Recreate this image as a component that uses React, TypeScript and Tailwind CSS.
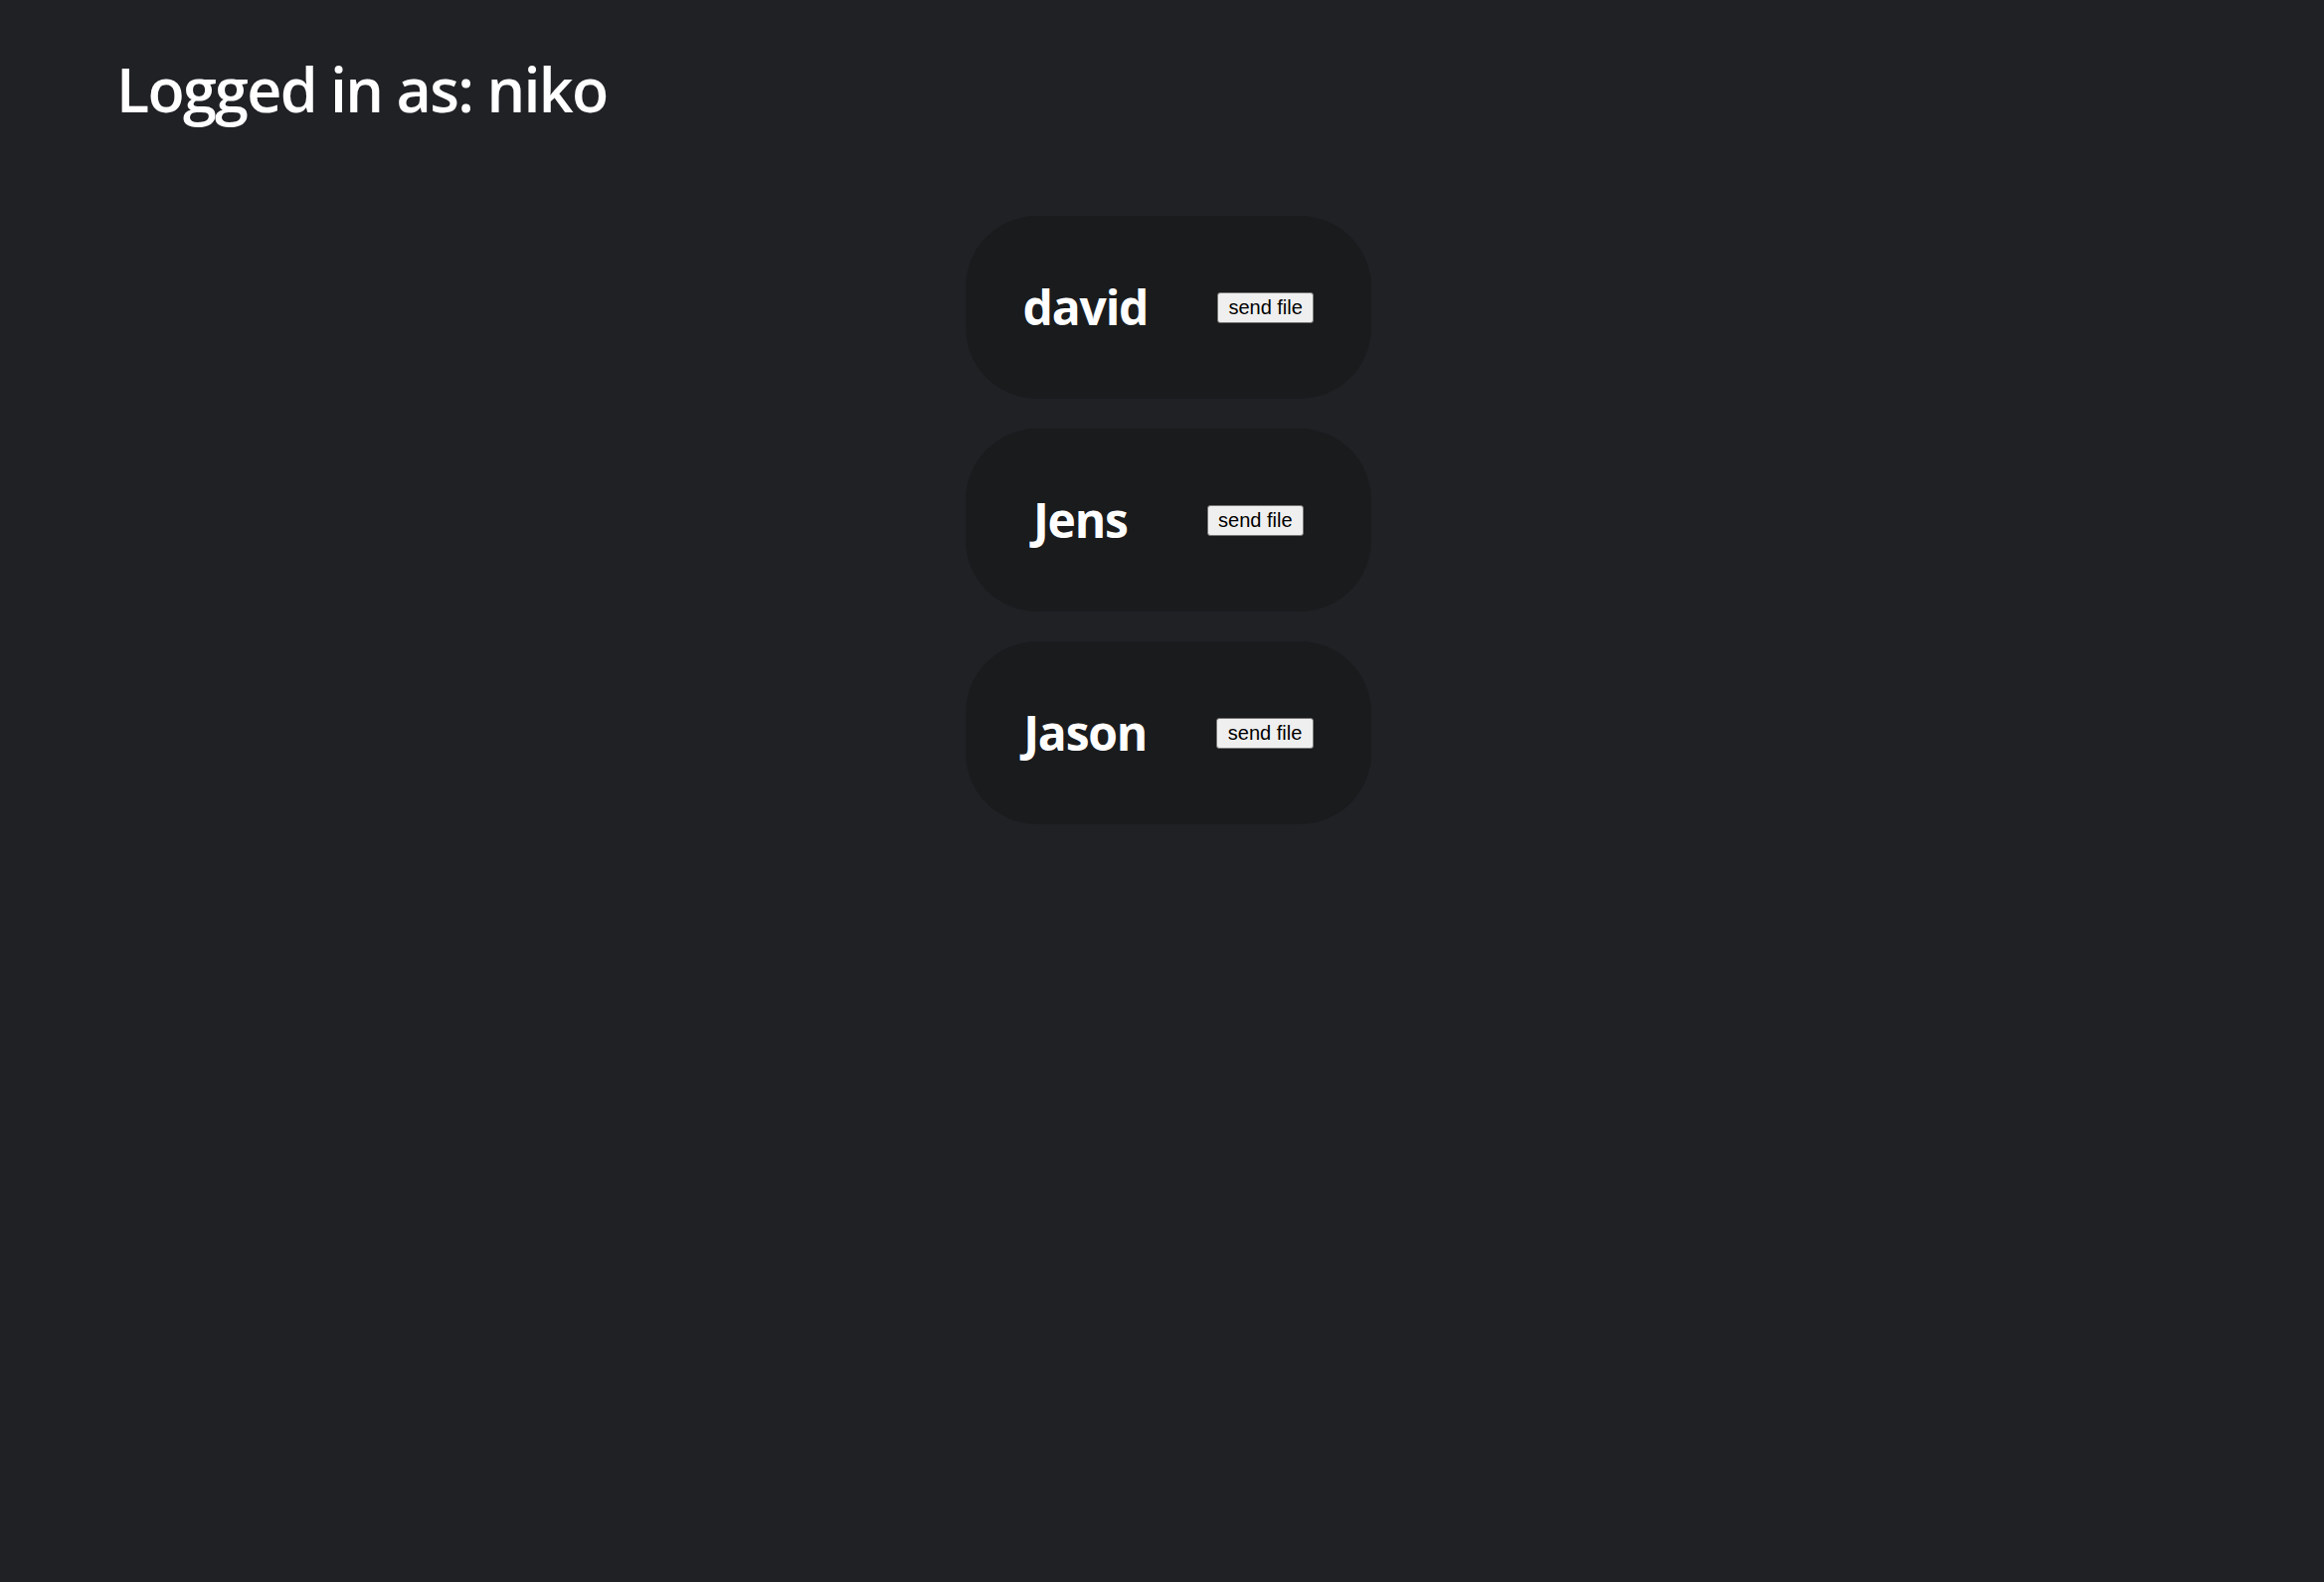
import React from "react";

const users = ["david", "Jens", "Jason"];

export default function App() {
  return (
    <div
      className="min-h-screen bg-[#202125] text-white"
      style={{ fontFamily: '"Open Sans", "Noto Sans", sans-serif' }}
    >
      <h1 className="pl-[117px] pt-[59px] text-[61px] font-semibold leading-none tracking-[-1.7px]">
        Logged in as: niko
      </h1>
      <div className="mt-[97px] flex flex-col items-center gap-[30px] pl-[13px]">
        {users.map((u) => (
          <div
            key={u}
            className="flex h-[184px] w-[408px] items-center justify-evenly rounded-[72px] bg-[#1a1b1d]"
          >
            <span className="pr-[12px] text-[48px] font-bold leading-none tracking-[-1.2px]">{u}</span>
            <button
              className="h-[31px] rounded-[3px] border-[1.5px] border-[#767676] bg-[#efefef] px-[10.5px] text-[20px] leading-none text-black"
              style={{ fontFamily: '"Liberation Sans", Arial, sans-serif' }}
            >
              send file
            </button>
          </div>
        ))}
      </div>
    </div>
  );
}
